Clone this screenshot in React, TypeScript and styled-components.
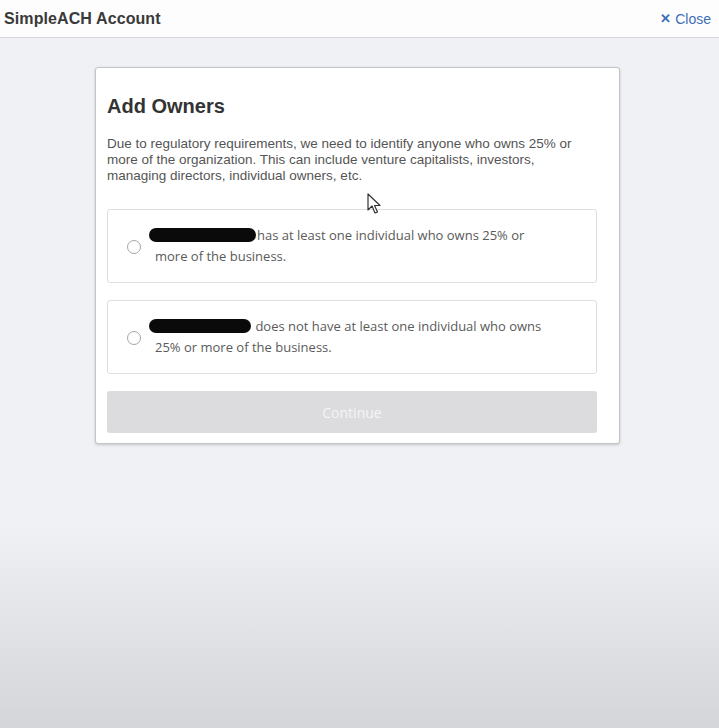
import styled, { createGlobalStyle } from "styled-components";

const GlobalStyle = createGlobalStyle`
  html, body {
    margin: 0;
    padding: 0;
  }
  body {
    font-family: "Liberation Sans", Arial, sans-serif;
  }
`;

const Page = styled.div`
  min-height: 100vh;
  background: linear-gradient(
    to bottom,
    #eff1f4 0%,
    #eff1f4 72%,
    #d4d5d9 100%
  );
`;

const Header = styled.div`
  height: 37px;
  display: flex;
  align-items: center;
  justify-content: space-between;
  padding: 0 8px 0 4px;
  background: #fdfdfd;
  border-bottom: 1px solid #d6d7da;
`;

const HeaderTitle = styled.div`
  font-size: 16px;
  font-weight: 700;
  color: #3a3a3a;
  letter-spacing: 0.1px;
`;

const CloseLink = styled.a`
  display: flex;
  align-items: center;
  gap: 4px;
  font-size: 14px;
  color: #3d6fb6;
  cursor: pointer;
`;

const CloseX = styled.span`
  font-weight: 700;
  font-size: 13px;
`;

const Card = styled.div`
  position: relative;
  width: 525px;
  box-sizing: border-box;
  margin: 29px 0 0 95px;
  padding: 26px 22px 10px 11px;
  background: #fff;
  border: 1px solid #c3c4c6;
  border-radius: 3px;
  box-shadow: 0 1px 3px rgba(0, 0, 0, 0.18);
`;

const Title = styled.h2`
  margin: 0;
  font-size: 20px;
  line-height: 24px;
  font-weight: 700;
  color: #333;
`;

const Description = styled.p`
  margin: 18px 0 0 0;
  width: 476px;
  font-size: 13.5px;
  line-height: 16px;
  color: #555;
`;

const Options = styled.div`
  display: flex;
  flex-direction: column;
  gap: 17px;
  margin-top: 25px;
`;

const Option = styled.label`
  display: flex;
  align-items: center;
  gap: 14px;
  height: 74px;
  box-sizing: border-box;
  padding: 0 20px 0 19px;
  border: 1px solid #dedfe1;
  border-radius: 3px;
  cursor: pointer;
`;

const Radio = styled.span`
  flex: 0 0 auto;
  width: 14px;
  height: 14px;
  box-sizing: border-box;
  border: 1.5px solid #a6a6a6;
  border-radius: 50%;
  margin-top: 2px;
`;

const OptionText = styled.span`
  max-width: 400px;
  font-family: "Open Sans", "Liberation Sans", sans-serif;
  font-size: 13px;
  line-height: 21px;
  color: #5a5a5a;
`;

const Redacted = styled.span<{ w: number }>`
  display: inline-block;
  width: ${(p) => p.w}px;
  height: 14px;
  margin: 0 1px 0 -6px;
  background: #0a0a0a;
  border-radius: 7px;
  vertical-align: -2px;
`;

const ContinueBtn = styled.button`
  display: block;
  width: 100%;
  height: 42px;
  margin-top: 17px;
  border: 0;
  border-radius: 3px;
  background: #dcdcde;
  color: #f4f4f5;
  font-family: "Open Sans", "Liberation Sans", sans-serif;
  font-size: 14px;
`;

const Cursor = styled.svg`
  position: absolute;
  left: 271px;
  top: 125px;
  width: 15px;
  height: 22px;
`;

export default function App() {
  return (
    <Page>
      <GlobalStyle />
      <Header>
        <HeaderTitle>SimpleACH Account</HeaderTitle>
        <CloseLink>
          <CloseX>✕</CloseX>Close
        </CloseLink>
      </Header>
      <Card>
        <Title>Add Owners</Title>
        <Description>
          Due to regulatory requirements, we need to identify anyone who owns 25% or
          more of the organization. This can include venture capitalists, investors,
          managing directors, individual owners, etc.
        </Description>
        <Options>
          <Option>
            <Radio />
            <OptionText>
              <Redacted w={107} />has at least one individual who owns 25% or
              more of the business.
            </OptionText>
          </Option>
          <Option>
            <Radio />
            <OptionText>
              <Redacted w={102} /> does not have at least one individual who owns
              25% or more of the business.
            </OptionText>
          </Option>
        </Options>
        <ContinueBtn disabled>Continue</ContinueBtn>
        <Cursor viewBox="0 0 15 22">
          <path
            d="M1 1 L1 17 L5 13 L8 20 L10.5 19 L7.5 12.5 L13 12.5 Z"
            fill="#fff"
            stroke="#333"
            strokeWidth="1.2"
            strokeLinejoin="round"
          />
        </Cursor>
      </Card>
    </Page>
  );
}
